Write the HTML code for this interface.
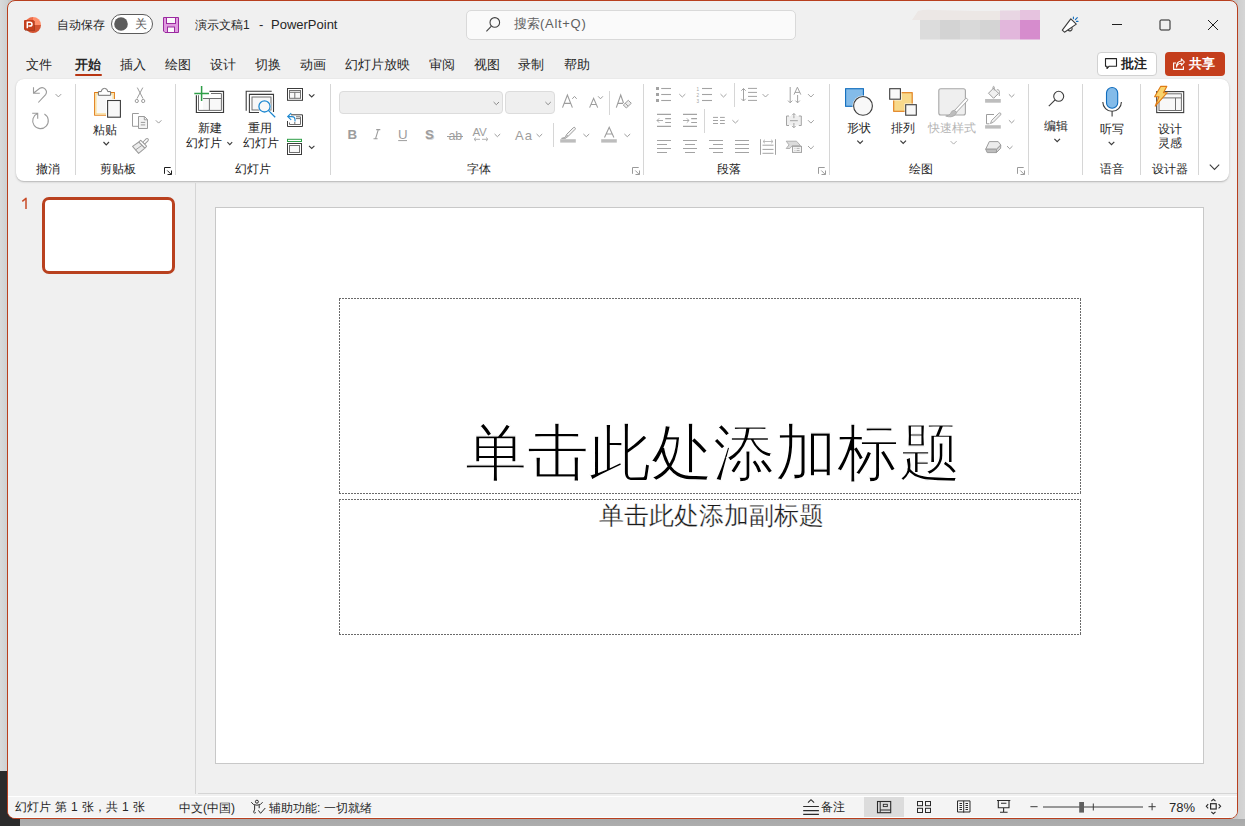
<!DOCTYPE html>
<html><head><meta charset="utf-8">
<style>
*{margin:0;padding:0;box-sizing:border-box}
html,body{width:1245px;height:826px;overflow:hidden;font-family:"Liberation Sans",sans-serif;color:#262626}
.a,.t{position:absolute}
.t{white-space:nowrap}
#win{left:7px;top:0;width:1231px;height:819px;border:1px solid #b83f1e;border-radius:8px;background:#f0f0f0}
svg{position:absolute;left:0;top:0}
</style></head><body>
<div class="a" style="left:0px;top:0px;width:1245px;height:826px;background:#c9c9c9"></div>
<div class="a" style="left:0px;top:0px;width:8px;height:771px;background:linear-gradient(90deg,#d9dadb,#ccd0d1)"></div>
<div class="a" style="left:0px;top:771px;width:20px;height:55px;background:#2b2b2b"></div>
<div class="a" style="left:20px;top:819px;width:1225px;height:7px;background:linear-gradient(180deg,#a8a9aa,#adadad)"></div>
<div class="a" style="left:1238px;top:0px;width:7px;height:819px;background:linear-gradient(90deg,#cfcfcf,#d5d5d5)"></div>
<div class="a" id="win"></div>
<div class="a" style="left:466px;top:10px;width:330px;height:30px;background:#fafafa;border:1px solid #d9d9d9;border-radius:5px"></div>
<div class="a" style="left:1097px;top:52px;width:60px;height:24px;background:#fff;border:1px solid #d1d1d1;border-radius:4px"></div>
<div class="a" style="left:1165px;top:52px;width:60px;height:24px;background:#c43e1c;border-radius:4px"></div>
<div class="a" style="left:75px;top:74px;width:27px;height:2px;background:#b83512;border-radius:1px"></div>
<div class="a" style="left:16px;top:79px;width:1213px;height:102px;background:#fff;border-radius:8px;box-shadow:0 1px 2.5px rgba(0,0,0,.16),0 0.5px 1px rgba(0,0,0,.1)"></div>
<div class="a" style="left:75px;top:84px;width:1px;height:91px;background:#d6d6d6"></div>
<div class="a" style="left:175px;top:84px;width:1px;height:91px;background:#d6d6d6"></div>
<div class="a" style="left:330px;top:84px;width:1px;height:91px;background:#d6d6d6"></div>
<div class="a" style="left:643px;top:84px;width:1px;height:91px;background:#d6d6d6"></div>
<div class="a" style="left:829px;top:84px;width:1px;height:91px;background:#d6d6d6"></div>
<div class="a" style="left:1028px;top:84px;width:1px;height:91px;background:#d6d6d6"></div>
<div class="a" style="left:1082px;top:84px;width:1px;height:91px;background:#d6d6d6"></div>
<div class="a" style="left:1140px;top:84px;width:1px;height:91px;background:#d6d6d6"></div>
<div class="a" style="left:1198px;top:84px;width:1px;height:91px;background:#d6d6d6"></div>
<div class="a" style="left:339px;top:91px;width:164px;height:23px;background:#efefef;border:1px solid #dcdcdc;border-radius:4px"></div>
<div class="a" style="left:505px;top:91px;width:50px;height:23px;background:#efefef;border:1px solid #dcdcdc;border-radius:4px"></div>
<div class="a" style="left:609px;top:91px;width:1px;height:24px;background:#d6d6d6"></div>
<div class="a" style="left:553px;top:123px;width:1px;height:24px;background:#d6d6d6"></div>
<div class="a" style="left:734px;top:83px;width:1px;height:24px;background:#d6d6d6"></div>
<div class="a" style="left:704px;top:109px;width:1px;height:24px;background:#d6d6d6"></div>
<div class="a" style="left:195px;top:183px;width:1px;height:611px;background:#d5d5d5"></div>
<div class="a" style="left:198px;top:793px;width:1039px;height:1px;background:#d5d5d5"></div>
<div class="a" style="left:42px;top:197px;width:133px;height:77px;background:#fff;border:3px solid #b9411f;border-radius:7px"></div>
<div class="a" style="left:215px;top:207px;width:989px;height:557px;background:#fff;border:1px solid #c8c8c8"></div>
<div class="a" style="left:8px;top:796px;width:1229px;height:1px;background:#fff"></div>
<div class="a" style="left:8px;top:797px;width:1229px;height:21px;background:#f4f4f4;border-radius:0 0 7px 7px"></div>
<div class="a" style="left:16px;top:817px;width:1213px;height:1px;background:#fbfdfd"></div>
<div class="a" style="left:864px;top:797px;width:40px;height:20px;background:#dcdcdc"></div>
<svg width="1245" height="826" viewBox="0 0 1245 826" fill="none" stroke-linecap="butt">
<path d="M33 17A8 8 0 0 1 41 25H33Z" fill="#ff8f6b"/>
<path d="M33 17A8 8 0 0 0 25 25H33Z" fill="#ed6c47"/>
<path d="M25 25A8 8 0 0 0 41 25Z" fill="#d35230"/>
<rect x="25" y="21" width="10" height="10" fill="#8a2a12" opacity=".55"/>
<rect x="24" y="20" width="10" height="10" rx="1" fill="#c43e1c"/>
<path d="M27.3 28.2V22.3H29.9Q32 22.3 32 24.2Q32 26.1 29.9 26.1H28.4" stroke="#fff" stroke-width="1.5"/>
<rect x="111.5" y="14.5" width="41" height="19" rx="9.5" fill="#fff" stroke="#5c5c5c"/>
<circle cx="121" cy="24" r="6.8" fill="#5c5c5c"/>
<path d="M163.5 17.5H178.5V32.5H165L163.5 31Z" fill="#e09be0" stroke="#9b2aa0"/>
<rect x="166.5" y="17.5" width="9" height="6" fill="#fafafa" stroke="#9b2aa0"/>
<rect x="167.5" y="27" width="7" height="5.5" fill="#fafafa" stroke="#9b2aa0"/>
<circle cx="494.8" cy="22.4" r="4.8" stroke="#424242" stroke-width="1.1"/>
<path d="M491.4 26.1L486.4 31.4" stroke="#424242" stroke-width="1.1"/>
<path d="M1070.8 18.8L1076.3 24.1L1064.5 32.2L1062.3 30.2Z" fill="#fff" stroke="#3a3a3a" stroke-width="1.1" stroke-linejoin="round"/>
<path d="M1067.9 29.9A2.3 2.3 0 1 0 1071.7 27.3" stroke="#3a3a3a" stroke-width="1.1"/>
<path d="M1073.4 17.1V18.6M1075.4 19.6L1077.3 17.6M1076.5 21.4H1078" stroke="#0f6cbd" stroke-width="1.1" stroke-linecap="round"/>
<path d="M1112 24.5H1122" stroke="#1f1f1f"/>
<rect x="1160" y="20" width="10" height="10" rx="1" stroke="#1f1f1f"/>
<path d="M1208 20L1218 30M1218 20L1208 30" stroke="#1f1f1f"/>
<path d="M912 20L918 11Q924 9 935 10L955 10.5L975 11L1000 11L1030 10.5Q1037 11 1040 14V20Z" fill="#ece7e5"/>
<rect x="920" y="20" width="20" height="19.5" fill="#dcdcdc"/>
<rect x="940" y="20" width="20" height="19.5" fill="#d3d3d3"/>
<rect x="960" y="20" width="20" height="19.5" fill="#d9d9d9"/>
<rect x="980" y="20" width="20" height="19.5" fill="#d4d4d4"/>
<rect x="1000" y="20" width="20" height="19.5" fill="#e2b7dc"/>
<rect x="1020" y="20" width="20" height="19.5" fill="#d68ccd"/>
<rect x="1000" y="10.5" width="20" height="9.5" fill="#e8d6e3"/><rect x="1020" y="10" width="20" height="10" fill="#e6c3df"/>
<path d="M1105.5 58.6H1116.5V66.2H1109.2L1107 68.5V66.2H1105.5Z" stroke="#242424" stroke-width="1.1" stroke-linejoin="round"/>
<path d="M1176 63H1173.6V69.4H1183.4V66.2" stroke="#fff" stroke-width="1.1"/><path d="M1176.6 67.2Q1177 63.6 1181.3 63.3V65.3L1184.4 62L1181.3 58.9V61Q1176.2 61.6 1176.6 67.2Z" stroke="#fff" stroke-width="1.05" stroke-linejoin="round"/>
<path d="M33.5 87.2V93.2H39.8M34 92.8L39.8 88.3A4.4 4.4 0 0 1 45.6 94.6L38.3 102.5" stroke="#9b9b9b" stroke-width="1.1"/>
<path d="M55.6 94.1l2.8 2.8l2.8 -2.8" stroke="#9b9b9b" stroke-width="1"/>
<path d="M44.4 114.1A7.8 7.8 0 1 1 37.6 113.6M32.2 113.3H37.7V118.8" stroke="#9b9b9b" stroke-width="1.1"/>
<rect x="94.6" y="92.5" width="19.8" height="22.7" fill="#f8f8f8" stroke="#e07b14"/>
<rect x="95.9" y="93.8" width="17.2" height="20.1" stroke="#fbdc8e" stroke-width="1.2"/>
<path d="M98.4 95.3V91.6H101.3A3.2 3.2 0 0 1 107.7 91.6H110.6V95.3Z" fill="#fff" stroke="#707070" stroke-width="1"/>
<rect x="106" y="99" width="16" height="20" fill="#fff"/>
<rect x="107.6" y="100.5" width="12.8" height="16.7" fill="#f8f8f8" stroke="#3c3c3c" stroke-width="1.1"/>
<path d="M103.5 142l2.75 2.8l2.75 -2.8" stroke="#3c3c3c" stroke-width="1.2"/>
<path d="M137.3 87.6L143 98.6M142.8 87.6L137 98.6" stroke="#9b9b9b" stroke-width="1"/><circle cx="136.8" cy="101" r="1.6" stroke="#9b9b9b"/><circle cx="143.2" cy="101" r="1.6" stroke="#9b9b9b"/>
<path d="M138.8 113.5H132.5V126.3H138" stroke="#9b9b9b"/><path d="M138.5 116.5H144.5L147.5 119.5V128.5H138.5Z" fill="#f4f4f4" stroke="#9b9b9b"/><path d="M144.3 116.5V119.8H147.5M140.8 122.4H145.2M140.8 124.9H145.2" stroke="#9b9b9b"/>
<path d="M155.8 120.3l2.8 2.8l2.8 -2.8" stroke="#9b9b9b" stroke-width="1"/>
<g transform="translate(142.3 144.6) rotate(-45)"><rect x="1.8" y="-1.3" width="6.2" height="2.6" rx="1.3" fill="#fff" stroke="#9b9b9b"/><path d="M-0.6 -4.3L-8.2 -5.6L-8.8 3.6L-0.6 4.3Z" fill="#ececec" stroke="#9b9b9b" stroke-linejoin="round"/><path d="M-8.5 -1L-0.8 0.3" stroke="#9b9b9b" stroke-width=".9"/><rect x="-0.6" y="-4.3" width="2.6" height="8.6" rx=".6" fill="#fff" stroke="#9b9b9b"/></g>
<path d="M164.5 173.8V167.5H170.7M167.3 170.5L171.3 174.5M171.5 170.5V174.5H167.5" stroke="#1f1f1f" stroke-width="1"/>
<path d="M209.5 91.4H223.5V112.5H196.4V95.2" stroke="#3c3c3c" stroke-width="1.2"/>
<rect x="203" y="98.5" width="18.4" height="11.9" fill="#f8f8f8"/><path d="M211 93.5H221.4V110.4H198.5V95.2M203 98.5H221.4M209.4 98.5V110.4" stroke="#707070" stroke-width="1"/>
<path d="M194.3 93.5H209M201.6 86.1V100.9" stroke="#2e9e47" stroke-width="1.5"/>
<path d="M271.7 91.3H246.2V110.7" stroke="#3c3c3c" stroke-width="1.1"/><path d="M259 112.5H249.4V94.4H273.5V112" stroke="#3c3c3c" stroke-width="1.1"/><rect x="252" y="97" width="19" height="13" fill="#f8f8f8" stroke="#707070"/>
<circle cx="264.5" cy="106.4" r="6.6" fill="#fff"/><circle cx="264.5" cy="106.4" r="5.6" fill="#f8f8f8" stroke="#1e88d0" stroke-width="1.3"/><path d="M268.6 110.6L275.2 117.3" stroke="#1e88d0" stroke-width="1.3"/>
<rect x="287.5" y="88.5" width="15" height="11.8" stroke="#3c3c3c"/><rect x="289.5" y="90.5" width="11" height="7.8" fill="#f8f8f8" stroke="#707070"/><path d="M289.5 92.3H300.5M294.8 92.3V98.3" stroke="#707070"/>
<path d="M309 94.3l2.7 2.7l2.7 -2.7" stroke="#3c3c3c" stroke-width="1.1"/>
<path d="M291 114.8H302.5V126.5H287.5V121" stroke="#3c3c3c"/><path d="M296 116.8H300.5V124.5H289.5V122.5M296 118.6H300.5M294.8 122V124.5" stroke="#707070"/>
<path d="M291.2 113.2L287.7 116.6L291.2 119.8M288 116.6H292A3 3 0 0 1 295 119.6V121.6" stroke="#1e88d0" stroke-width="1.1"/>
<rect x="287.5" y="139.3" width="14" height="2.2" fill="#fff" stroke="#2e9e47"/><rect x="287.5" y="143.5" width="14" height="11" stroke="#3c3c3c"/><rect x="289.5" y="145.5" width="10" height="7" fill="#f8f8f8" stroke="#707070"/>
<path d="M309 145.8l2.7 2.7l2.7 -2.7" stroke="#3c3c3c" stroke-width="1.1"/>
<path d="M227.4 142.2l2.4 2.4l2.4 -2.4" stroke="#3c3c3c" stroke-width="1.1"/>
<path d="M493.6 102l2.7 2.7l2.7 -2.7" stroke="#8a8a8a" stroke-width="1"/>
<path d="M545.4 102l2.7 2.7l2.7 -2.7" stroke="#8a8a8a" stroke-width="1"/>
<path d="M562.5 107.6L567.4 95L572.4 107.6M564.1 103.4H570.7" stroke="#9d9d9d" stroke-width="1.1"/><path d="M572.3 98.8L574.5 96.4L576.7 98.8" stroke="#9d9d9d"/>
<path d="M589.6 107.6L593.6 98.3L597.7 107.6M590.9 104.5H596.4" stroke="#9d9d9d" stroke-width="1.1"/><path d="M598.1 96.3L600.5 98.8L602.9 96.3" stroke="#9d9d9d"/>
<path d="M616.3 107.6L620.7 95L623.5 103M617.8 103.4H623" stroke="#9d9d9d" stroke-width="1.1"/><path d="M623.3 105L628.3 100.3L631.3 103.3L626.3 108Z" fill="#ececec" stroke="#9d9d9d"/><path d="M625.2 103.2L628.1 106.1" stroke="#9d9d9d"/>
<text x="347.6" y="139" font-family="Liberation Sans" font-weight="700" font-size="13.3" fill="#9d9d9d">B</text>
<path d="M376.2 129.6H380.3M373.5 138.8H377.6M378.3 129.6L375.5 138.8" stroke="#9d9d9d" stroke-width="1.1"/>
<text x="398" y="139" font-family="Liberation Sans" font-size="13.3" fill="#9d9d9d">U</text><path d="M398.2 140.6H407" stroke="#9d9d9d"/>
<text x="425.8" y="139.8" font-family="Liberation Sans" font-weight="700" font-size="13.3" fill="#d6d6d6">S</text><text x="425" y="139" font-family="Liberation Sans" font-weight="700" font-size="13.3" fill="#9d9d9d">S</text>
<text x="448.4" y="139.6" font-family="Liberation Sans" font-size="12.4" fill="#9d9d9d">ab</text><path d="M447 136.5H463" stroke="#9d9d9d"/>
<text x="472.4" y="135.5" font-family="Liberation Sans" font-size="11.6" fill="#9d9d9d" letter-spacing="-0.3">AV</text><path d="M476 137.5L474 139.3L476 141.1M474.2 139.3H480M486 137.5L488 139.3L486 141.1M482 139.3H487.8" stroke="#b0b0b0"/>
<path d="M494.6 134l2.8 2.7l2.8 -2.7" stroke="#9d9d9d" stroke-width="1"/>
<text x="515" y="139.8" font-family="Liberation Sans" font-size="13" fill="#9d9d9d" letter-spacing="1.2">Aa</text>
<path d="M536.6 134l2.8 2.7l2.8 -2.7" stroke="#9d9d9d" stroke-width="1"/>
<path d="M566.5 134.5L573.3 127.7Q574.2 126.9 575 127.7Q575.9 128.5 575 129.4L568.3 136.2Z" fill="#f4f4f4" stroke="#9d9d9d"/><path d="M566.5 134.5L565.2 137.2L561.5 138.4H565.5L568.3 136.2" fill="#c8c8c8" stroke="#9d9d9d" stroke-width=".8"/>
<rect x="560.2" y="139.2" width="15.6" height="3.4" fill="#bdbdbd"/>
<path d="M583.4 134l2.9 2.7l2.9 -2.7" stroke="#9d9d9d" stroke-width="1"/>
<path d="M604.5 137.6L609.2 127.3L613.9 137.6M606.2 134H612.2" stroke="#9d9d9d" stroke-width="1.1"/><rect x="601.2" y="139.2" width="15.6" height="3.4" fill="#bdbdbd"/>
<path d="M624.4 134l2.9 2.7l2.9 -2.7" stroke="#9d9d9d" stroke-width="1"/>
<path d="M632.5 173.8V167.5H638.7M635.3 170.5L639.3 174.5M639.5 170.5V174.5H635.5" stroke="#9a9a9a" stroke-width="1"/>
<rect x="656" y="87.0" width="3" height="3" fill="#a3a3a3"/><path d="M661.2 88.5H671" stroke="#a3a3a3" stroke-width="1.1"/><path d="M702 88.5H712" stroke="#a3a3a3" stroke-width="1.1"/>
<rect x="656" y="93.0" width="3" height="3" fill="#a3a3a3"/><path d="M661.2 94.5H671" stroke="#a3a3a3" stroke-width="1.1"/><path d="M702 94.5H712" stroke="#a3a3a3" stroke-width="1.1"/>
<rect x="656" y="99.0" width="3" height="3" fill="#a3a3a3"/><path d="M661.2 100.5H671" stroke="#a3a3a3" stroke-width="1.1"/><path d="M702 100.5H712" stroke="#a3a3a3" stroke-width="1.1"/>
<text x="696.6" y="91" font-family="Liberation Sans" font-size="4.6" fill="#a3a3a3">1</text><text x="696.4" y="97" font-family="Liberation Sans" font-size="4.6" fill="#a3a3a3">2</text><text x="696.4" y="103" font-family="Liberation Sans" font-size="4.6" fill="#a3a3a3">3</text>
<path d="M679.3 94.1l3.0 2.9l3.0 -2.9" stroke="#a3a3a3" stroke-width="1"/>
<path d="M720.5 94.1l3.0 2.9l3.0 -2.9" stroke="#a3a3a3" stroke-width="1"/>
<path d="M743.5 88.5V101M741.3 90.7L743.5 88.5L745.7 90.7M741.3 98.8L743.5 101L745.7 98.8M748 88.4H757M748 92.4H757M748 96.4H757M748 100.4H757" stroke="#a3a3a3"/>
<path d="M762.6 94.1l2.9 2.9l2.9 -2.9" stroke="#a3a3a3" stroke-width="1"/>
<path d="M790.2 87V102.8M788 100.6L790.2 102.8L792.4 100.6M797.6 95V102.8M795.4 100.6L797.6 102.8L799.8 100.6M794 94.6L797.4 87.2L800.8 94.6M795 92.4H799.8" stroke="#a3a3a3"/>
<path d="M808 94.1l2.9 2.9l2.9 -2.9" stroke="#a3a3a3" stroke-width="1"/>
<path d="M657 114.4H671M665.2 118.6H671M665.2 122.5H671M657 126.4H671" stroke="#a3a3a3" stroke-width="1.1"/>
<path d="M663 120.5H657M659.2 118.3L657 120.5L659.2 122.7" stroke="#a3a3a3" stroke-width=".9"/>
<path d="M683 114.4H697M691.2 118.6H697M691.2 122.5H697M683 126.4H697" stroke="#a3a3a3" stroke-width="1.1"/>
<path d="M683 120.5H689M686.8 118.3L689 120.5L686.8 122.7" stroke="#a3a3a3" stroke-width=".9"/>
<path d="M713 117.4H718M720 117.4H724.8" stroke="#a3a3a3"/>
<path d="M713 120.5H718M720 120.5H724.8" stroke="#a3a3a3"/>
<path d="M713 123.5H718M720 123.5H724.8" stroke="#a3a3a3"/>
<path d="M732.4 120.2l3.0 2.8l3.0 -2.8" stroke="#a3a3a3" stroke-width="1"/>
<rect x="787" y="116" width="14.2" height="9.2" fill="#efefef"/><path d="M789 116H786.5V125.5H789M798.8 116H801.3V125.5H798.8M790 120.7H797.8M793.9 113.6V118.2M792.1 115.3L793.9 113.5L795.7 115.3M793.9 123V127.6M792.1 125.9L793.9 127.7L795.7 125.9" stroke="#a3a3a3"/>
<path d="M808 120.2l2.9 2.9l2.9 -2.9" stroke="#a3a3a3" stroke-width="1"/>
<path d="M657 140.5H671M657 144.5H667M657 148.5H671M657 152.5H667" stroke="#a3a3a3" stroke-width="1.1"/>
<path d="M683 140.5H697M685 144.5H695M683 148.5H697M685 152.5H695" stroke="#a3a3a3" stroke-width="1.1"/>
<path d="M709 140.5H723M713 144.5H723M709 148.5H723M713 152.5H723" stroke="#a3a3a3" stroke-width="1.1"/>
<path d="M735 140.5H749M735 144.5H749M735 148.5H749M735 152.5H749" stroke="#a3a3a3" stroke-width="1.1"/>
<path d="M760.5 139.2V154.8M775.5 139.2V154.8M762.5 145.2H773.5M762.5 149.4H773.5M762.5 153.3H773.5" stroke="#a3a3a3"/><path d="M763 141.5H773M765 139.7L763 141.5L765 143.3M771 139.7L773 141.5L771 143.3" stroke="#b4b4b4" stroke-width=".9"/>
<path d="M786.2 141.2H796.5L800.5 145.6H792.2L789.8 148.5H786.2L789 144.9Z" fill="#dcdcdc" stroke="#a3a3a3" stroke-width=".8"/><rect x="792.5" y="146.4" width="9" height="6" fill="#f4f4f4" stroke="#a3a3a3"/><path d="M794.6 148.4H795.3M796.6 148.4H799.6M794.6 150.5H795.3M796.6 150.5H799.6" stroke="#a3a3a3" stroke-width=".8"/>
<path d="M808 146l2.9 2.9l2.9 -2.9" stroke="#a3a3a3" stroke-width="1"/>
<path d="M818.5 173.8V167.5H824.7M821.3 170.5L825.3 174.5M825.5 170.5V174.5H821.5" stroke="#9a9a9a" stroke-width="1"/>
<rect x="845.6" y="88.7" width="17.8" height="17.6" fill="#83bbe9" stroke="#0f6cbd" stroke-width="1.1"/>
<circle cx="863" cy="105.9" r="10.5" fill="#fff"/><circle cx="863" cy="105.9" r="9.4" fill="#f8f8f8" stroke="#3c3c3c" stroke-width="1.1"/>
<path d="M857.3 140.7l2.8 2.8l2.8 -2.8" stroke="#3c3c3c" stroke-width="1.2"/>
<rect x="893.7" y="92.7" width="18.5" height="18.6" fill="#f8d98b" stroke="#e07b14" stroke-width="1.1"/>
<rect x="888.6" y="87.6" width="13" height="12.8" fill="#fff"/><rect x="889.7" y="88.7" width="10.7" height="10.5" fill="#f8f8f8" stroke="#3c3c3c" stroke-width="1.1"/>
<rect x="904.6" y="103.6" width="13" height="12.8" fill="#fff"/><rect x="905.7" y="104.7" width="10.6" height="10.5" fill="#f8f8f8" stroke="#3c3c3c" stroke-width="1.1"/>
<path d="M900.4 140.7l2.8 2.8l2.8 -2.8" stroke="#3c3c3c" stroke-width="1.2"/>
<rect x="938.8" y="88.7" width="26.6" height="26.3" rx="2" fill="#efefef" stroke="#a6a6a6" stroke-width="1.1"/>
<path d="M966.8 98.4Q968.3 99.5 967.3 100.8L956.5 112.2L954.5 110.5L965.3 98.8Q966 98 966.8 98.4Z" fill="#fff" stroke="#a6a6a6"/><path d="M954.3 110.2L956.8 112.5Q955 116.5 951 116.8Q948 117 945.7 116Q949.5 115.6 950.5 113.5Q951.5 110.5 954.3 110.2Z" fill="#bdbdbd" stroke="#a6a6a6" stroke-width=".8"/>
<path d="M950.6 141.1l3.0 3l3.0 -3" stroke="#b0b0b0" stroke-width="1"/>
<path d="M988.5 93.2L993.5 88.2L998.6 93.3L993.6 98.3Z" fill="#f0f0f0" stroke="#9d9d9d"/><path d="M993 89V86.8Q993.6 86 994.2 86.8V90.5M996.8 89.8Q998.8 89 999.3 91.2V96" stroke="#9d9d9d" stroke-width=".9"/><rect x="985.1" y="99" width="15.7" height="3.7" fill="#bdbdbd"/>
<path d="M1008.9 94.3l2.75 2.7l2.75 -2.7" stroke="#9d9d9d" stroke-width="1"/>
<path d="M994 114.5H986.5V123.8H989.5" stroke="#9d9d9d"/><path d="M990.5 123.5L991.7 120.3L998.8 113.2Q999.7 112.4 1000.6 113.2Q1001.3 114 1000.6 114.9L993.4 122.2Z" fill="#f0f0f0" stroke="#9d9d9d" stroke-width=".9"/><rect x="985.1" y="125.2" width="15.7" height="3.4" fill="#bdbdbd"/>
<path d="M1008.9 120.2l2.75 2.7l2.75 -2.7" stroke="#9d9d9d" stroke-width="1"/>
<path d="M989.3 141.6H998.2L1000.8 145L996.6 149.2H985.7Z" fill="#ececec" stroke="#9d9d9d" stroke-linejoin="round"/><path d="M985.7 149.2H996.6L996.4 152.6H987.2Z" fill="#bdbdbd" stroke="#9d9d9d" stroke-linejoin="round"/><path d="M996.6 149.2L1000.8 145L1000.6 148.4L996.4 152.6Z" fill="#d4d4d4" stroke="#9d9d9d" stroke-linejoin="round"/>
<path d="M1007 146.1l2.75 2.7l2.75 -2.7" stroke="#9d9d9d" stroke-width="1"/>
<path d="M1017.5 173.8V167.5H1023.7M1020.3 170.5L1024.3 174.5M1024.5 170.5V174.5H1020.5" stroke="#9a9a9a" stroke-width="1"/>
<circle cx="1058.7" cy="96.3" r="5" fill="#fafafa" stroke="#3c3c3c" stroke-width="1.1"/><path d="M1055.1 99.9L1048.8 106.2" stroke="#3c3c3c" stroke-width="1.1"/>
<path d="M1054.4 138.8l2.8 2.8l2.8 -2.8" stroke="#3c3c3c" stroke-width="1.2"/>
<rect x="1106.5" y="87.5" width="11.2" height="20.8" rx="5.6" fill="#83bbe9" stroke="#0f6cbd" stroke-width="1.1"/><path d="M1102.8 102A9.3 9.3 0 0 0 1121.4 102M1112.1 111.4V116.5" stroke="#3c3c3c" stroke-width="1.1"/>
<path d="M1108.7 141.8l2.8 2.8l2.8 -2.8" stroke="#3c3c3c" stroke-width="1.2"/>
<rect x="1156.7" y="91.6" width="27" height="21" stroke="#3c3c3c" stroke-width="1.1"/><rect x="1159" y="93.8" width="22.4" height="16.7" fill="#f8f8f8" stroke="#707070"/><path d="M1159 97.9H1181.4M1175.5 97.9V110.5" stroke="#707070"/>
<path d="M1160.6 86.4H1166.8L1163.4 92.7H1167.2L1155.2 106.2L1158.9 96.8H1154.6Z" fill="#f9d36b" stroke="#e07b14" stroke-width="1.1" stroke-linejoin="round"/>
<path d="M1209.8 164.6L1214.5 169.4L1219.2 164.6" stroke="#3c3c3c" stroke-width="1.1"/>
<path d="M22.3 201.3L26 198.3V209" stroke="#c84a26" stroke-width="1.5" stroke-linejoin="round"/>
<path d="M339 298.5H1081M339 493.5H1081M339.5 299V493M1080.5 299V493M339 499.5H1081M339 634.5H1081M339.5 500V634M1080.5 500V634" stroke="#6a6a6a" stroke-dasharray="2 1"/>
<path d="M803.2 806.5H818.9M803.2 810.6H818.9M803.2 814.4H818.9M808 802.7L811 799.7L814.1 802.7" stroke="#2b2b2b" stroke-width="1.1"/>
<rect x="877.5" y="801.5" width="13.2" height="11.2" stroke="#2b2b2b" stroke-width="1.1"/><path d="M880.2 801.5V812.5M880.2 810H890.7" stroke="#2b2b2b"/><rect x="883.3" y="804.3" width="4" height="2.3" stroke="#2b2b2b" stroke-width=".9"/>
<rect x="917.5" y="801.5" width="5" height="4.2" stroke="#2b2b2b"/><rect x="925.5" y="801.5" width="5" height="4.2" stroke="#2b2b2b"/><rect x="917.5" y="808.3" width="5" height="4.2" stroke="#2b2b2b"/><rect x="925.5" y="808.3" width="5" height="4.2" stroke="#2b2b2b"/>
<path d="M957.5 800.9H970V812H957.5ZM963.7 800.9V812.6M959.5 803.5H962M959.5 805.5H962M959.5 807.5H962M959.5 809.5H962M965.5 803.5H968M965.5 805.5H968M965.5 807.5H968M965.5 809.5H968" stroke="#2b2b2b" stroke-width="1"/>
<path d="M997 800.5H1010.3M998.3 800.5V807.8H1009V800.5M1003.6 807.8V812.3M1000 812.3H1007.6M1001 803.2H1006.4" stroke="#2b2b2b" stroke-width="1.1"/>
<path d="M1030.4 806.7H1037.6M1043 807H1143M1093.3 803.5V810.5M1148.5 806.7H1155.7M1152.1 803.1V810.3" stroke="#3c3c3c" stroke-width="1"/><rect x="1079.2" y="802" width="4.8" height="10.6" fill="#606060"/>
<rect x="1210.6" y="803.7" width="5.6" height="5.3" stroke="#2b2b2b" stroke-width="1.2"/><path d="M1211.3 801.2L1213.4 799.3L1215.5 801.2M1211.3 811.8L1213.4 813.7L1215.5 811.8M1208.2 804.2L1206.3 806.3L1208.2 808.4M1218.6 804.2L1220.6 806.3L1218.6 808.4" stroke="#2b2b2b" stroke-width="1.1"/>
<circle cx="256.9" cy="801.7" r="1.5" stroke="#2b2b2b" stroke-width="1"/><path d="M251.3 802.2Q253 805.4 256.9 805.2Q260.8 805.4 262.6 802.2M254.6 805.2Q255.2 809.5 253.6 812.3Q254.3 813.6 255.8 812.6M259.2 805.2V808.2M258.4 810.4L260.6 813.3L265.3 808" stroke="#2b2b2b" stroke-width="1"/>
</svg>
<div class="t" style="left:57px;top:19px;font-size:12px;line-height:12px;color:#262626;">自动保存</div>
<div class="t" style="left:135px;top:18px;font-size:12px;line-height:12px;color:#5c5c5c;">关</div>
<div class="t" style="left:195px;top:19px;font-size:12px;line-height:12px;color:#262626;">演示文稿1</div>
<div class="t" style="left:259px;top:19px;font-size:12px;line-height:12px;color:#262626;font-size:13px">-</div>
<div class="t" style="left:271px;top:18px;font-size:13px;line-height:13px;color:#262626;">PowerPoint</div>
<div class="t" style="left:514px;top:17px;font-size:13px;line-height:13px;color:#5f5f5f;">搜索</div>
<div class="t" style="left:540px;top:17px;font-size:13px;line-height:13px;color:#5f5f5f;letter-spacing:0.7px">(Alt+Q)</div>
<div class="t" style="left:1121px;top:57px;font-size:13px;line-height:13px;color:#242424;font-weight:700;">批注</div>
<div class="t" style="left:1189px;top:57px;font-size:13px;line-height:13px;color:#fff;font-weight:700;">共享</div>
<div class="t" style="left:26px;top:58px;font-size:13px;line-height:13px;color:#262626;">文件</div>
<div class="t" style="left:75px;top:58px;font-size:13px;line-height:13px;color:#262626;font-weight:700;">开始</div>
<div class="t" style="left:120px;top:58px;font-size:13px;line-height:13px;color:#262626;">插入</div>
<div class="t" style="left:165px;top:58px;font-size:13px;line-height:13px;color:#262626;">绘图</div>
<div class="t" style="left:210px;top:58px;font-size:13px;line-height:13px;color:#262626;">设计</div>
<div class="t" style="left:255px;top:58px;font-size:13px;line-height:13px;color:#262626;">切换</div>
<div class="t" style="left:300px;top:58px;font-size:13px;line-height:13px;color:#262626;">动画</div>
<div class="t" style="left:345px;top:58px;font-size:13px;line-height:13px;color:#262626;">幻灯片放映</div>
<div class="t" style="left:429px;top:58px;font-size:13px;line-height:13px;color:#262626;">审阅</div>
<div class="t" style="left:474px;top:58px;font-size:13px;line-height:13px;color:#262626;">视图</div>
<div class="t" style="left:518px;top:58px;font-size:13px;line-height:13px;color:#262626;">录制</div>
<div class="t" style="left:564px;top:58px;font-size:13px;line-height:13px;color:#262626;">帮助</div>
<div class="t" style="left:93px;top:124px;font-size:12px;line-height:12px;color:#262626;">粘贴</div>
<div class="t" style="left:198px;top:122px;font-size:12px;line-height:12px;color:#262626;">新建</div>
<div class="t" style="left:186px;top:137px;font-size:12px;line-height:12px;color:#262626;">幻灯片</div>
<div class="t" style="left:248px;top:122px;font-size:12px;line-height:12px;color:#262626;">重用</div>
<div class="t" style="left:243px;top:137px;font-size:12px;line-height:12px;color:#262626;">幻灯片</div>
<div class="t" style="left:847px;top:122px;font-size:12px;line-height:12px;color:#262626;">形状</div>
<div class="t" style="left:891px;top:122px;font-size:12px;line-height:12px;color:#262626;">排列</div>
<div class="t" style="left:928px;top:122px;font-size:12px;line-height:12px;color:#b5b5b5;">快速样式</div>
<div class="t" style="left:1044px;top:120px;font-size:12px;line-height:12px;color:#262626;">编辑</div>
<div class="t" style="left:1100px;top:123px;font-size:12px;line-height:12px;color:#262626;">听写</div>
<div class="t" style="left:1158px;top:123px;font-size:12px;line-height:12px;color:#262626;">设计</div>
<div class="t" style="left:1158px;top:137px;font-size:12px;line-height:12px;color:#262626;">灵感</div>
<div class="t" style="left:36px;top:163px;font-size:12px;line-height:12px;color:#262626;">撤消</div>
<div class="t" style="left:100px;top:163px;font-size:12px;line-height:12px;color:#262626;">剪贴板</div>
<div class="t" style="left:235px;top:163px;font-size:12px;line-height:12px;color:#262626;">幻灯片</div>
<div class="t" style="left:467px;top:163px;font-size:12px;line-height:12px;color:#262626;">字体</div>
<div class="t" style="left:717px;top:163px;font-size:12px;line-height:12px;color:#262626;">段落</div>
<div class="t" style="left:909px;top:163px;font-size:12px;line-height:12px;color:#262626;">绘图</div>
<div class="t" style="left:1100px;top:163px;font-size:12px;line-height:12px;color:#262626;">语音</div>
<div class="t" style="left:1152px;top:163px;font-size:12px;line-height:12px;color:#262626;">设计器</div>
<div class="t" style="left:465px;top:422px;font-size:62px;line-height:62px;color:#000;-webkit-text-stroke:1.4px #fff">单击此处添加标题</div>
<div class="t" style="left:599px;top:504px;font-size:24.5px;line-height:24.5px;color:#1a1a1a;-webkit-text-stroke:0.3px #fff">单击此处添加副标题</div>
<div class="t" style="left:15px;top:801px;font-size:12px;line-height:12px;color:#262626;">幻灯片</div>
<div class="t" style="left:55px;top:801px;font-size:12px;line-height:12px;color:#262626;">第</div>
<div class="t" style="left:71px;top:801px;font-size:12px;line-height:12px;color:#262626;">1</div>
<div class="t" style="left:82px;top:801px;font-size:12px;line-height:12px;color:#262626;">张</div>
<div class="t" style="left:94px;top:801px;font-size:12px;line-height:12px;color:#262626;">，</div>
<div class="t" style="left:106px;top:801px;font-size:12px;line-height:12px;color:#262626;">共</div>
<div class="t" style="left:122px;top:801px;font-size:12px;line-height:12px;color:#262626;">1</div>
<div class="t" style="left:133px;top:801px;font-size:12px;line-height:12px;color:#262626;">张</div>
<div class="t" style="left:179px;top:802px;font-size:12px;line-height:12px;color:#262626;">中文(中国)</div>
<div class="t" style="left:269px;top:802px;font-size:12px;line-height:12px;color:#262626;">辅助功能: 一切就绪</div>
<div class="t" style="left:821px;top:801px;font-size:12px;line-height:12px;color:#262626;">备注</div>
<div class="t" style="left:1169px;top:801px;font-size:13px;line-height:13px;color:#262626;">78%</div>
</body></html>
